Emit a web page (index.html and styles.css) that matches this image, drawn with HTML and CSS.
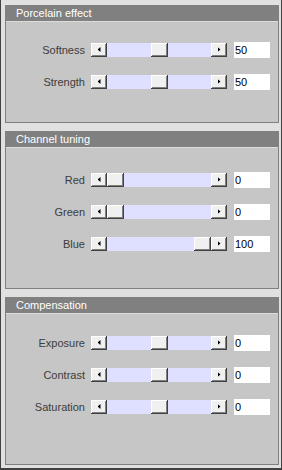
FILE: index.html
```html
<!DOCTYPE html>
<html lang="en">
<head>
	<meta charset="UTF-8">
	<title>Effects</title>
<link rel="stylesheet" href="styles.css">
</head>
<body>
<div class="window">

	<section class="panel panel_porcelain">
		<div class="panel_title">Porcelain effect</div>
		<div class="panel_body">
			<div class="row">
				<label class="row_label">Softness</label>
				<div class="scroll">
					<span class="scroll_btn scroll_btn-left"></span>
					<div class="scroll_track"><span class="scroll_thumb" style="--v: 0.5"></span></div>
					<span class="scroll_btn scroll_btn-right"></span>
				</div>
				<input class="row_value" type="text" value="50">
			</div>
			<div class="row">
				<label class="row_label">Strength</label>
				<div class="scroll">
					<span class="scroll_btn scroll_btn-left"></span>
					<div class="scroll_track"><span class="scroll_thumb" style="--v: 0.5"></span></div>
					<span class="scroll_btn scroll_btn-right"></span>
				</div>
				<input class="row_value" type="text" value="50">
			</div>
		</div>
	</section>

	<section class="panel panel_channel">
		<div class="panel_title">Channel tuning</div>
		<div class="panel_body">
			<div class="row">
				<label class="row_label">Red</label>
				<div class="scroll">
					<span class="scroll_btn scroll_btn-left"></span>
					<div class="scroll_track"><span class="scroll_thumb" style="--v: 0"></span></div>
					<span class="scroll_btn scroll_btn-right"></span>
				</div>
				<input class="row_value" type="text" value="0">
			</div>
			<div class="row">
				<label class="row_label">Green</label>
				<div class="scroll">
					<span class="scroll_btn scroll_btn-left"></span>
					<div class="scroll_track"><span class="scroll_thumb" style="--v: 0"></span></div>
					<span class="scroll_btn scroll_btn-right"></span>
				</div>
				<input class="row_value" type="text" value="0">
			</div>
			<div class="row">
				<label class="row_label">Blue</label>
				<div class="scroll">
					<span class="scroll_btn scroll_btn-left"></span>
					<div class="scroll_track"><span class="scroll_thumb" style="--v: 1"></span></div>
					<span class="scroll_btn scroll_btn-right"></span>
				</div>
				<input class="row_value" type="text" value="100">
			</div>
		</div>
	</section>

	<section class="panel panel_compensation">
		<div class="panel_title">Compensation</div>
		<div class="panel_body">
			<div class="row">
				<label class="row_label">Exposure</label>
				<div class="scroll">
					<span class="scroll_btn scroll_btn-left"></span>
					<div class="scroll_track"><span class="scroll_thumb" style="--v: 0.5"></span></div>
					<span class="scroll_btn scroll_btn-right"></span>
				</div>
				<input class="row_value" type="text" value="0">
			</div>
			<div class="row">
				<label class="row_label">Contrast</label>
				<div class="scroll">
					<span class="scroll_btn scroll_btn-left"></span>
					<div class="scroll_track"><span class="scroll_thumb" style="--v: 0.5"></span></div>
					<span class="scroll_btn scroll_btn-right"></span>
				</div>
				<input class="row_value" type="text" value="0">
			</div>
			<div class="row">
				<label class="row_label">Saturation</label>
				<div class="scroll">
					<span class="scroll_btn scroll_btn-left"></span>
					<div class="scroll_track"><span class="scroll_thumb" style="--v: 0.5"></span></div>
					<span class="scroll_btn scroll_btn-right"></span>
				</div>
				<input class="row_value" type="text" value="0">
			</div>
		</div>
	</section>

</div>
</body>
</html>
```

FILE: styles.css
```css
	body{
		margin: 0;
		font-family: "Liberation Sans", Arial, sans-serif;
		font-size: 11px;
	}
	.window{
		width: 282px;
		height: 470px;
		box-sizing: border-box;
		background-color: #e0e0e0;
		border-left: 1px solid #404040;
		border-right: 1px solid #404040;
		border-bottom: 2px solid #404040;
		padding: 5px 2px 3px 4px;
		display: flex;
		flex-direction: column;
		gap: 8px;
	}
	.panel{
		box-sizing: border-box;
		border: 1px solid #808080;
		background-color: #c6c6c6;
	}
	.panel_porcelain{
		height: 118px;
	}
	.panel_channel{
		height: 158px;
	}
	.panel_compensation{
		height: 168px;
	}
	.panel_title{
		height: 15px;
		line-height: 15px;
		background-color: #808080;
		border-bottom: 1px solid #dcdcdc;
		color: #fff;
		padding-left: 10px;
	}
	.panel_body{
		display: flex;
		flex-direction: column;
		gap: 16px;
		padding-top: 20px;
	}
	.panel_channel .panel_body{
		padding-top: 24px;
	}
	.panel_compensation .panel_body{
		padding-top: 21px;
	}
	.row{
		display: flex;
		align-items: center;
		height: 16px;
	}
	.row_label{
		width: 79px;
		margin-right: 6px;
		text-align: right;
		color: #3c3c3c;
	}
	.scroll{
		display: flex;
		width: 136px;
		height: 14px;
		margin-right: 7px;
	}
	.scroll_track{
		position: relative;
		flex: 1;
		background-color: #dfdfff;
	}
	.scroll_btn,
	.scroll_thumb{
		box-sizing: border-box;
		height: 14px;
		background-color: #f0f0f0;
		box-shadow: inset -1px -1px #404040, inset 1px 1px #ffffff, inset -2px -2px #808080;
	}
	.scroll_btn{
		width: 16px;
		display: flex;
		align-items: center;
		justify-content: center;
	}
	.scroll_btn::before{
		content: "";
		width: 3px;
		height: 5px;
		margin-bottom: 1px;
		background-color: #000;
	}
	.scroll_btn-left::before{
		clip-path: polygon(100% 0, 0 50%, 100% 100%);
	}
	.scroll_btn-right::before{
		clip-path: polygon(0 0, 100% 50%, 0 100%);
	}
	.scroll_thumb{
		position: absolute;
		top: 0;
		width: 17px;
		left: calc((100% - 17px) * var(--v));
	}
	.row_value{
		box-sizing: border-box;
		width: 36px;
		height: 16px;
		border: none;
		padding: 0 1px;
		margin: 0;
		background-color: #fff;
		font-family: "Liberation Sans", Arial, sans-serif;
		font-size: 11px;
		color: #000;
	}
```
